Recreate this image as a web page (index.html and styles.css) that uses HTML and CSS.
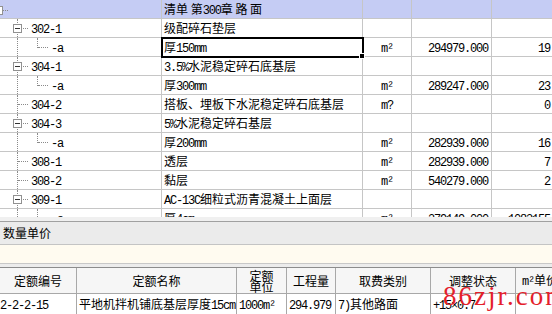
FILE: index.html
```html
<!DOCTYPE html>
<html lang="zh-CN">
<head>
    <meta charset="UTF-8">
    <title>清单 第300章 路面</title>
    <link rel="stylesheet" href="styles.css">
</head>
<body>
    <div class="screen">
        <div class="bill">
            <table class="grid">
                <colgroup>
                    <col class="c-tree"><col class="c-name"><col class="c-unit"><col class="c-qty"><col class="c-sum">
                </colgroup>
                <tr class="head">
                    <td class="tree"><i class="t-root"></i><i class="t-rootline"></i></td>
                    <td>清单 第<span class="n">300</span>章 路 面</td>
                    <td></td><td></td><td></td>
                </tr>
                <tr>
                    <td class="tree"><i class="t-v"></i><i class="t-h"></i><i class="t-box"></i><span class="n lv1">302-1</span></td>
                    <td>级配碎石垫层</td>
                    <td></td><td></td><td></td>
                </tr>
                <tr>
                    <td class="tree"><i class="t-v"></i><i class="t-cv"></i><i class="t-ch"></i><span class="n lv2">-a</span></td>
                    <td class="selected">厚<span class="n">150mm</span></td>
                    <td class="unit"><span class="n">m²</span></td>
                    <td class="num"><span class="n">294979.000</span></td>
                    <td class="num"><span class="n">19.67</span></td>
                </tr>
                <tr>
                    <td class="tree"><i class="t-v"></i><i class="t-h"></i><i class="t-box"></i><span class="n lv1">304-1</span></td>
                    <td><span class="n">3.5%</span>水泥稳定碎石底基层</td>
                    <td></td><td></td><td></td>
                </tr>
                <tr>
                    <td class="tree"><i class="t-v"></i><i class="t-cv"></i><i class="t-ch"></i><span class="n lv2">-a</span></td>
                    <td>厚<span class="n">300mm</span></td>
                    <td class="unit"><span class="n">m²</span></td>
                    <td class="num"><span class="n">289247.000</span></td>
                    <td class="num"><span class="n">23.41</span></td>
                </tr>
                <tr>
                    <td class="tree"><i class="t-v"></i><i class="t-h"></i><span class="n lv1">304-2</span></td>
                    <td>搭板、埋板下水泥稳定碎石底基层</td>
                    <td class="unit"><span class="n">m?</span></td>
                    <td></td>
                    <td class="num"><span class="n">0.00</span></td>
                </tr>
                <tr>
                    <td class="tree"><i class="t-v"></i><i class="t-h"></i><i class="t-box"></i><span class="n lv1">304-3</span></td>
                    <td><span class="n">5%</span>水泥稳定碎石基层</td>
                    <td></td><td></td><td></td>
                </tr>
                <tr>
                    <td class="tree"><i class="t-v"></i><i class="t-cv"></i><i class="t-ch"></i><span class="n lv2">-a</span></td>
                    <td>厚<span class="n">200mm</span></td>
                    <td class="unit"><span class="n">m²</span></td>
                    <td class="num"><span class="n">282939.000</span></td>
                    <td class="num"><span class="n">16.05</span></td>
                </tr>
                <tr>
                    <td class="tree"><i class="t-v"></i><i class="t-h"></i><span class="n lv1">308-1</span></td>
                    <td>透层</td>
                    <td class="unit"><span class="n">m²</span></td>
                    <td class="num"><span class="n">282939.000</span></td>
                    <td class="num"><span class="n">7.12</span></td>
                </tr>
                <tr>
                    <td class="tree"><i class="t-v"></i><i class="t-h"></i><span class="n lv1">308-2</span></td>
                    <td>黏层</td>
                    <td class="unit"><span class="n">m²</span></td>
                    <td class="num"><span class="n">540279.000</span></td>
                    <td class="num"><span class="n">2.30</span></td>
                </tr>
                <tr>
                    <td class="tree"><i class="t-v"></i><i class="t-h"></i><i class="t-box"></i><span class="n lv1">309-1</span></td>
                    <td><span class="n">AC-13C</span>细粒式沥青混凝土上面层</td>
                    <td></td><td></td><td></td>
                </tr>
                <tr>
                    <td class="tree"><i class="t-v"></i><i class="t-cv full"></i><i class="t-ch"></i><span class="n lv2">-a</span></td>
                    <td>厚<span class="n">4cm</span></td>
                    <td class="unit"><span class="n">m²</span></td>
                    <td class="num"><span class="n">279149.000</span></td>
                    <td class="num"><span class="n">1083155.88</span></td>
                </tr>
            </table>
        </div>

        <div class="splitter"></div>
        <div class="tabbar">数量单价</div>
        <div class="strip"></div>

        <div class="quota">
            <table class="qgrid">
                <colgroup>
                    <col class="q1"><col class="q2"><col class="q3"><col class="q4"><col class="q5"><col class="q6"><col class="q7">
                </colgroup>
                <tr class="qhead">
                    <td>定额编号</td>
                    <td>定额名称</td>
                    <td class="two">定额<br>单位</td>
                    <td>工程量</td>
                    <td>取费类别</td>
                    <td>调整状态</td>
                    <td class="left"><span class="n">m²</span>单价</td>
                </tr>
                <tr class="qrow">
                    <td class="first"><span class="n">2-2-2-15</span></td>
                    <td>平地机拌机铺底基层厚度<span class="n">15cm</span></td>
                    <td><span class="n">1000m²</span></td>
                    <td><span class="n">294.979</span></td>
                    <td><span class="n">7)</span>其他路面</td>
                    <td><span class="n">+15×0.7</span></td>
                    <td></td>
                </tr>
            </table>
        </div>

        <div class="mark">86zjr.com</div>
    </div>
</body>
</html>
```

FILE: styles.css
```css
body {
    margin: 0;
    background: #fff;
    font-family: "Noto Sans CJK SC", sans-serif;
    font-size: 12px;
    color: #000;
}
.screen {
    position: relative;
    width: 552px;
    height: 314px;
    overflow: hidden;
}
.n {
    font-family: "Liberation Mono", monospace;
    font-size: 12px;
    line-height: 12px;
    letter-spacing: -1.2px;
}

/* bill of quantities grid */
.bill {
    height: 217px;
    overflow: hidden;
}
.grid {
    width: 572px;
    table-layout: fixed;
    border-collapse: separate;
    border-spacing: 0;
}
.c-tree { width: 162px; }
.c-name { width: 201px; }
.c-unit { width: 49px; }
.c-qty { width: 80px; }
.c-sum { width: 80px; }
.grid td {
    box-sizing: border-box;
    height: 19px;
    padding: 0 0 0 2px;
    line-height: 18px;
    white-space: nowrap;
    overflow: hidden;
    border-right: 1px solid #c6c6c6;
    border-bottom: 1px solid #c6c6c6;
    position: relative;
}
.grid .head td {
    background: #c5ccf4;
}
.grid td.unit {
    text-align: center;
    padding: 0;
}
.grid td.num {
    text-align: right;
    padding: 0 3px 0 0;
}
.grid td.selected {
    outline: 2px solid #000;
    outline-offset: -1px;
    z-index: 2;
    overflow: visible;
}
.grid td.selected::after {
    content: "";
    position: absolute;
    right: -3px;
    bottom: -3px;
    width: 4px;
    height: 4px;
    background: #000;
    border: 1px solid #fff;
}

/* tree connectors */
.tree { padding: 0; }
.tree i {
    position: absolute;
    display: block;
}
.t-v {
    left: 17px;
    top: 0;
    bottom: 0;
    border-left: 1px dotted #8a8a8a;
}
.t-h {
    left: 18px;
    top: 9px;
    width: 10px;
    border-top: 1px dotted #8a8a8a;
}
.t-cv {
    left: 37px;
    top: 0;
    height: 10px;
    border-left: 1px dotted #8a8a8a;
}
.t-cv.full { height: 18px; }
.t-ch {
    left: 38px;
    top: 9px;
    width: 10px;
    border-top: 1px dotted #8a8a8a;
}
.t-box {
    left: 13px;
    top: 5px;
    width: 7px;
    height: 7px;
    border: 1px solid #919191;
    background: #fff;
}
.t-box::after {
    content: "";
    position: absolute;
    left: 1px;
    top: 3px;
    width: 5px;
    height: 1px;
    background: #333;
}
.t-root {
    left: -5px;
    top: 6px;
    width: 6px;
    height: 7px;
    border: 1px solid #919191;
    background: #fff;
}
.t-rootline {
    left: 3px;
    top: 10px;
    width: 5px;
    border-top: 1px dotted #8a8a8a;
}
.lv1 { margin-left: 29px; }
.lv2 { margin-left: 49px; }

/* lower panel */
.splitter {
    height: 4px;
    background: #f0f0f0;
    border-bottom: 1px solid #a0a0a0;
}
.tabbar {
    height: 22px;
    line-height: 22px;
    padding-left: 3px;
    background: #ebebeb;
    border-bottom: 1px solid #c4c4c4;
    font-size: 12px;
}
.strip {
    height: 18px;
    background: #fffbf0;
    border-bottom: 1px solid #c8c8c8;
}
.quota {
    padding-top: 3px;
    background: #ececec;
}
.qgrid {
    width: 600px;
    table-layout: fixed;
    border-collapse: separate;
    border-spacing: 0;
    border-top: 1px solid #8c8c8c;
}
.q1 { width: 77px; }
.q2 { width: 160px; }
.q3 { width: 50px; }
.q4 { width: 49px; }
.q5 { width: 95px; }
.q6 { width: 85px; }
.q7 { width: 84px; }
.qgrid td {
    box-sizing: border-box;
    padding: 0 0 0 2px;
    white-space: nowrap;
    overflow: hidden;
    border-right: 1px solid #a8a8a8;
    border-bottom: 1px solid #a8a8a8;
}
.qhead td {
    height: 26px;
    background: #f6f6f6;
    text-align: center;
    line-height: 12px;
    padding: 0;
}
.qhead td.two { line-height: 11px; }
.qhead td.left {
    text-align: left;
    padding-left: 6px;
}
.qrow td {
    height: 21px;
    background: #fff;
    line-height: 20px;
}
.qrow td.first { padding-left: 0; }

.mark {
    position: absolute;
    left: 443px;
    top: 281px;
    font-family: "Liberation Serif", serif;
    font-size: 27px;
    line-height: 30px;
    letter-spacing: 2px;
    color: #e4202a;
    white-space: nowrap;
}
```
